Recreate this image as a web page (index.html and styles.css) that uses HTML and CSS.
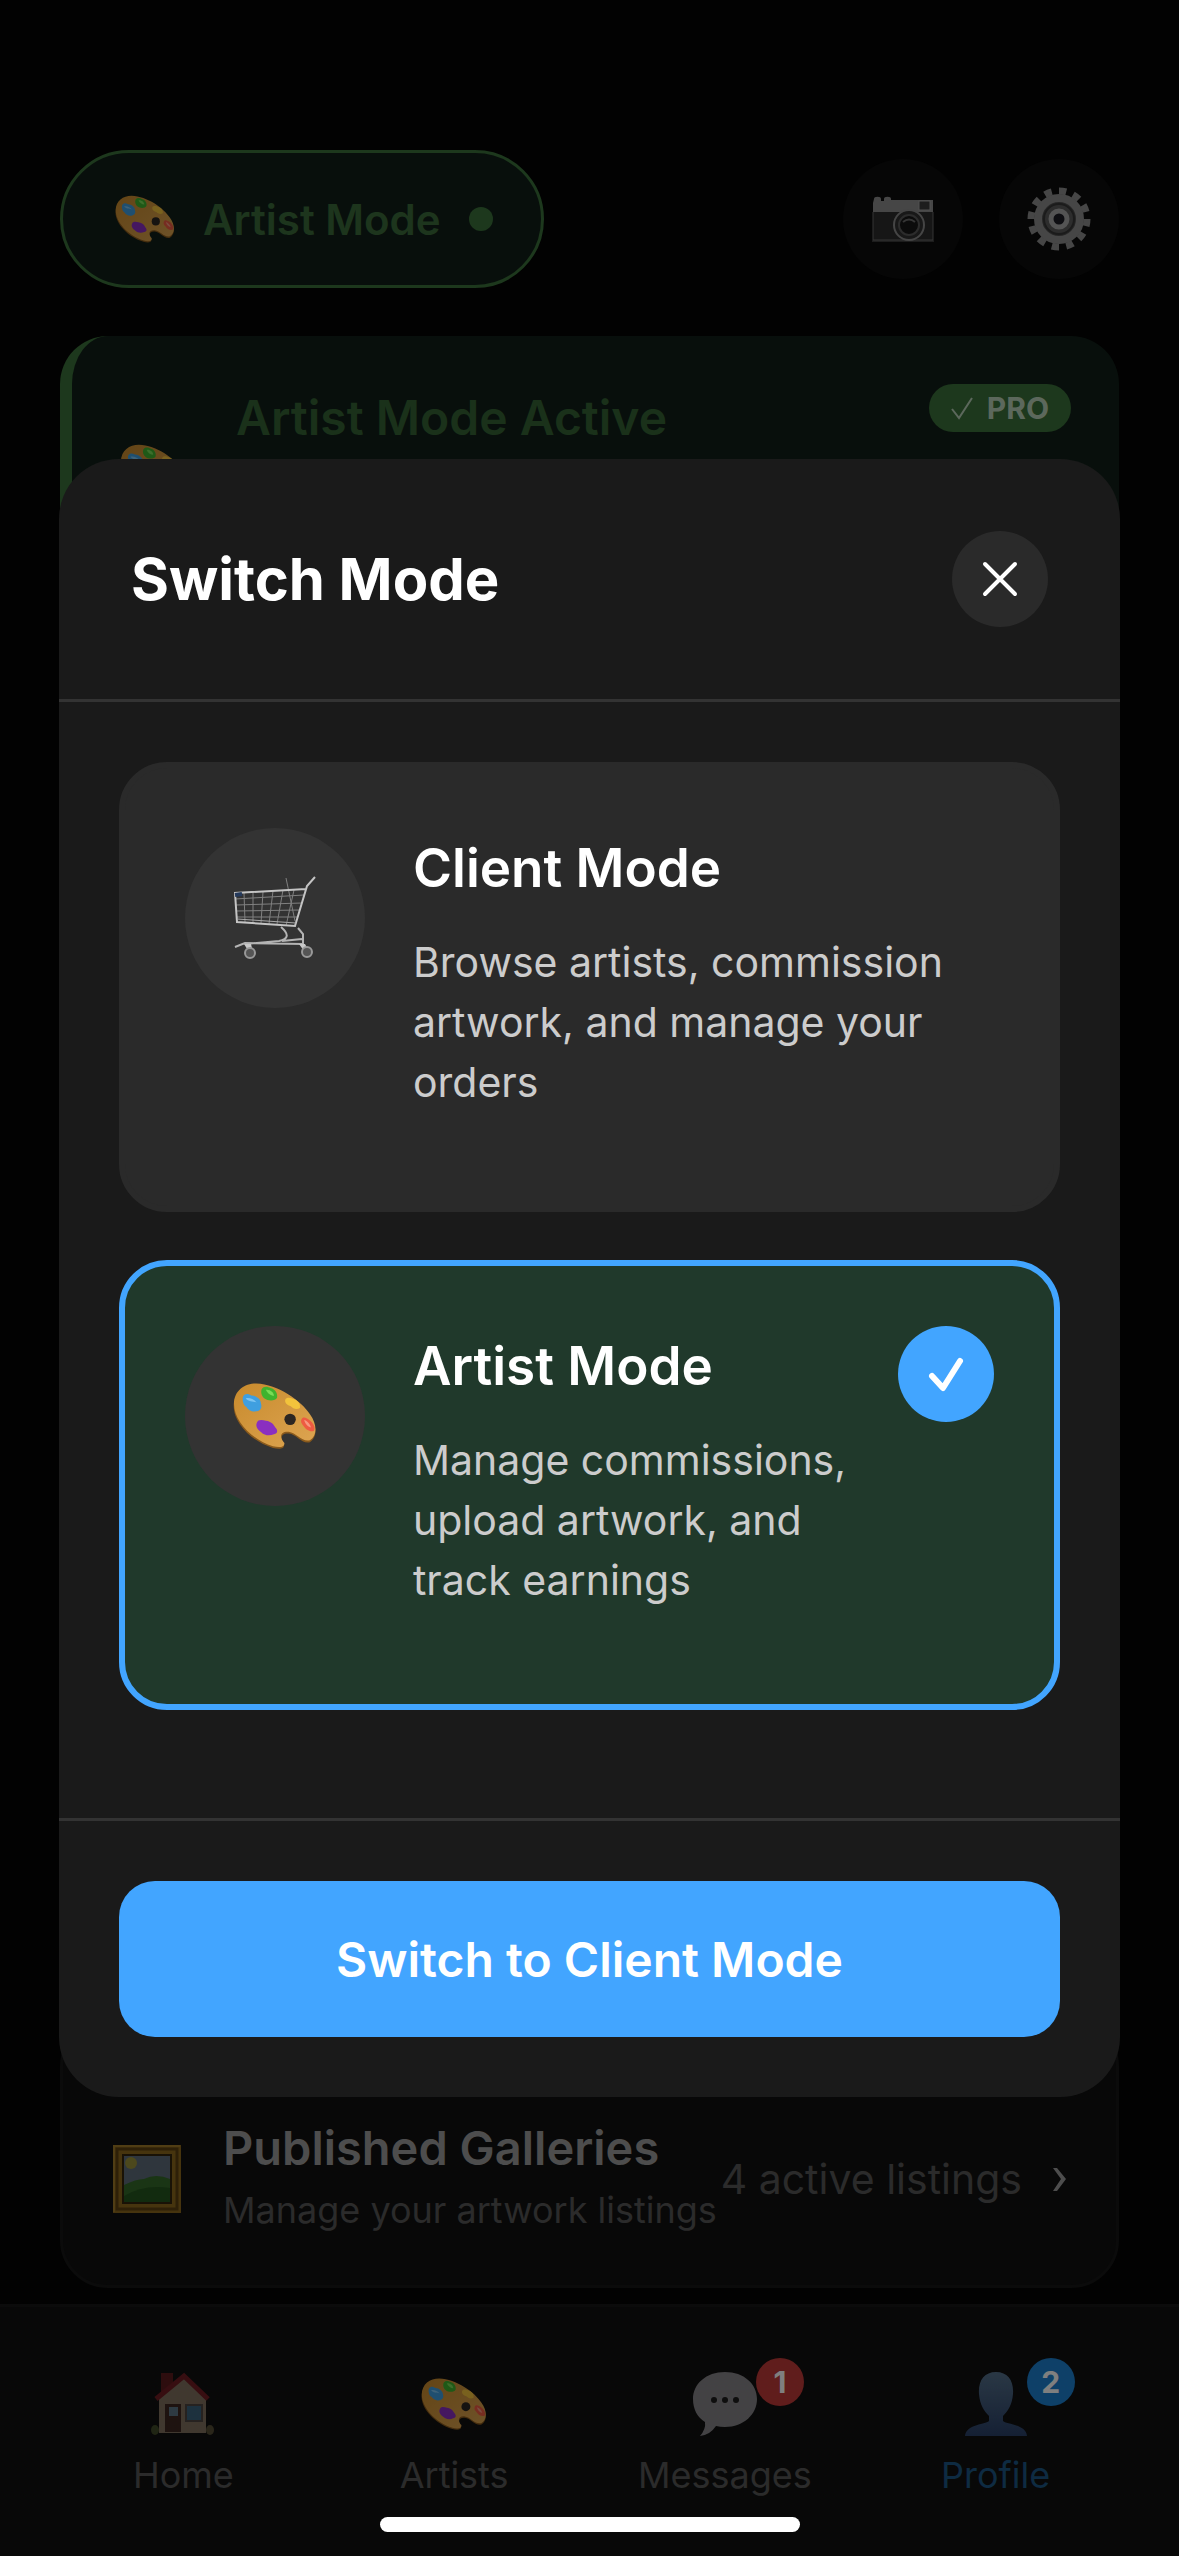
FILE: index.html
```html
<!DOCTYPE html>
<html lang="en">
<head>
<meta charset="utf-8">
<meta name="viewport" content="width=device-width, initial-scale=1">
<title>Switch Mode</title>
<link rel="stylesheet" href="styles.css">
</head>
<body>
<svg class="sprite" aria-hidden="true">
  <defs>
    <linearGradient id="wood" x1="0" y1="0" x2="1" y2="1">
      <stop offset="0" stop-color="#c88a2c"/>
      <stop offset="1" stop-color="#dda552"/>
    </linearGradient>
    <linearGradient id="silhouette" x1="0" y1="0" x2="0" y2="1">
      <stop offset="0" stop-color="#54708a"/>
      <stop offset="1" stop-color="#2a4068"/>
    </linearGradient>
    <symbol id="palette" viewBox="96 74 250 200">
      <path fill="#8a5a1c" d="M98 146C98 104 130 82 165 82C230 84 300 134 325 174C347 204 347 238 325 252C300 258 285 228 262 226C238 224 235 242 248 258C250 274 232 273 215 269C150 250 98 194 98 146Z"/>
      <path fill="url(#wood)" d="M99 138C99 98 130 77 165 77C230 79 300 129 325 169C347 199 347 233 325 246C302 253 285 224 262 221C235 219 234 238 249 254C250 269 232 268 215 264C152 245 99 188 99 138Z"/>
      <path fill="#3f9fe0" d="M126 116C132 106 142 108 150 113C162 112 180 124 179 137C184 150 176 160 164 160C154 163 140 155 136 147C128 144 122 126 126 116Z"/>
      <path fill="#7cc4f2" d="M134 122C142 118 160 124 166 134C156 130 142 132 134 122Z"/>
      <path fill="#3fb32e" d="M181 95C186 84 200 86 208 91C222 94 230 108 227 120C222 130 200 130 190 122C182 116 178 104 181 95Z"/>
      <path fill="#78dc56" d="M194 96C206 94 218 104 218 114C208 114 198 106 194 96Z"/>
      <path fill="#f2c33c" d="M252 124C258 116 270 120 278 124C290 128 298 140 295 150C286 156 274 152 268 145C258 142 248 134 252 124Z"/>
      <path fill="#8a2fc0" d="M167 194C170 183 184 185 194 188C210 190 218 200 222 208C230 216 230 226 218 228C204 234 190 232 180 222C170 216 162 204 167 194Z"/>
      <path fill="#ee5a42" d="M300 184C304 174 316 180 326 188C338 198 342 212 336 219C324 222 312 214 306 204C300 198 296 190 300 184Z"/>
      <path fill="#f79880" d="M308 186C316 188 326 198 328 208C318 206 310 196 308 186Z"/>
      <circle cx="266" cy="184" r="17" fill="#2c2622"/>
    </symbol>
  </defs>
</svg>

<div class="screen">
  <header class="topbar">
    <button class="mode-pill" type="button">
      <svg class="palette-sm" aria-hidden="true"><use href="#palette"/></svg>
      <span>Artist Mode</span>
      <span class="dot"></span>
    </button>
    <div class="tools">
      <button class="tool" type="button" aria-label="Camera">
        <svg width="64" height="46" viewBox="0 0 64 46" aria-hidden="true">
          <path fill="#8c8c8c" d="M3 3a3 2 0 0 1 7 0v2h3V3a3 2 0 0 1 7 0v1h42v13H2V7z"/>
          <path fill="#2c2c2c" d="M2 16h60v28H2z"/>
          <path fill="none" stroke="#6a6a6a" d="M2 16v28h60V16M1 45h62"/>
          <rect x="48" y="5" width="11" height="9" fill="#3a3a3a" stroke="#a0a0a0"/>
          <circle cx="38" cy="29" r="15" fill="#303030" stroke="#8a8a8a" stroke-width="2"/>
          <circle cx="38" cy="29" r="10" fill="#161616" stroke="#585858" stroke-width="2"/>
          <path fill="none" stroke="#6a6a6a" stroke-width="2" d="M32 26q6-5 12 0"/>
        </svg>
      </button>
      <button class="tool" type="button" aria-label="Settings">
        <svg width="64" height="64" viewBox="0 0 64 64" aria-hidden="true">
          <circle cx="32" cy="32" r="28" fill="none" stroke="#8c8c8c" stroke-width="7" pathLength="24" stroke-dasharray="1 1"/>
          <circle cx="32" cy="32" r="21" fill="#4c4c4c" stroke="#8c8c8c" stroke-width="8"/>
          <circle cx="32" cy="32" r="15" fill="#5a5a5a" stroke="#363636" stroke-width="2"/>
          <circle cx="32" cy="32" r="8" fill="#1c1c24" stroke="#a8a8a8" stroke-width="5"/>
        </svg>
      </button>
    </div>
  </header>

  <section class="banner">
    <svg class="palette-md" aria-hidden="true"><use href="#palette"/></svg>
    <h2>Artist Mode Active</h2>
    <span class="pro">
      <svg width="22" height="24" viewBox="0 0 22 24" aria-hidden="true"><path fill="none" stroke="#b8d0b8" stroke-width="2" d="M1 13l7 9L21 2"/></svg>
      PRO
    </span>
  </section>

  <a class="gallery" href="#galleries">
    <svg width="72" height="72" viewBox="0 0 72 72" aria-hidden="true">
      <rect x="2" y="2" width="68" height="68" fill="#8c681c"/>
      <rect x="6" y="6" width="60" height="60" fill="none" stroke="#5c4010" stroke-width="3"/>
      <rect x="12" y="12" width="48" height="48" fill="#5e6c7a" stroke="#33250c" stroke-width="2"/>
      <circle cx="20" cy="20" r="6" fill="#98903a"/>
      <path fill="#346a2a" d="M13 42q12-6 20-6q12-6 26 0v23H13z"/>
      <path fill="#24561f" d="M13 53q20-12 46-8v14H13z"/>
      <path fill="none" stroke="#a07a28" stroke-width="2" d="M3 69V3h66"/>
    </svg>
    <span class="gallery-text">
      <strong>Published Galleries</strong>
      <small>Manage your artwork listings</small>
    </span>
    <span class="gallery-count">4 active listings</span>
    <svg class="chevron" width="16" height="26" viewBox="0 0 16 26" aria-hidden="true"><path fill="#9a9a9a" d="M1 2h4l9 11l-9 12H1l8-12z"/></svg>
  </a>

  <nav class="tabs">
    <a class="tab" href="#home">
      <svg width="64" height="66" viewBox="0 0 64 66" aria-hidden="true">
        <path fill="#5a1a1c" d="M10 2h12v22H10z"/>
        <path fill="#80705e" d="M8 62V26L33 7l22 20v35z"/>
        <path fill="none" stroke="#6e1c22" stroke-width="5" d="M5 28L33 5l24 23"/>
        <rect x="14" y="33" width="16" height="28" fill="#3c2620"/>
        <rect x="18" y="36" width="9" height="9" fill="#5c7484"/>
        <rect x="35" y="34" width="16" height="16" fill="#3a627c" stroke="#4c4440" stroke-width="2"/>
        <ellipse cx="4" cy="59" rx="4" ry="5" fill="#404a28"/>
        <ellipse cx="59" cy="59" rx="4" ry="5" fill="#544c34"/>
      </svg>
      <span>Home</span>
    </a>
    <a class="tab" href="#artists">
      <svg class="palette-tab" aria-hidden="true"><use href="#palette"/></svg>
      <span>Artists</span>
    </a>
    <a class="tab" href="#messages">
      <svg width="64" height="66" viewBox="0 0 64 66" aria-hidden="true">
        <path fill="#868488" d="M32 1c19 0 32 12 32 27S51 56 32 56q-5 0-9-1q-6 9-16 10q6-7 5-14C4 46 0 38 0 28C0 13 13 1 32 1z"/>
        <g fill="#1c1c1c"><circle cx="21" cy="29" r="3"/><circle cx="32" cy="29" r="3"/><circle cx="43" cy="29" r="3"/></g>
      </svg>
      <span>Messages</span>
      <b class="count red">1</b>
    </a>
    <a class="tab active" href="#profile">
      <svg width="64" height="66" viewBox="0 0 64 66" aria-hidden="true">
        <path fill="url(#silhouette)" d="M32 1c12 0 18 9 17 22c-1 11-5 17-10 22v5c2 3 23 3 24 15H1c1-12 22-12 24-15v-5c-5-5-9-11-10-22C14 10 20 1 32 1z"/>
      </svg>
      <span>Profile</span>
      <b class="count blue">2</b>
    </a>
  </nav>
</div>

<div class="scrim">
  <div class="modal" role="dialog" aria-modal="true" aria-labelledby="dialog-title">
    <div class="modal-head">
      <h1 id="dialog-title">Switch Mode</h1>
      <button class="close" type="button" aria-label="Close">
        <svg width="36" height="36" viewBox="0 0 36 36" aria-hidden="true"><path fill="none" stroke="#fff" stroke-width="4" stroke-linecap="round" d="M3 3l30 30M33 3L3 33"/></svg>
      </button>
    </div>
    <div class="modal-body">
      <button class="option" type="button" aria-pressed="false">
        <span class="option-icon">
          <svg width="86" height="86" viewBox="0 0 86 86" fill="none" stroke="#a8a8a8" stroke-width="1" aria-hidden="true">
            <path stroke="#808080" d="M12 18l1 29M21 17l0 30M31 17l-2 31M41 16l-4 33M51 15l-6 34M62 15l-8 36M3 24l69-4M4 30l66-2M4 36l64-1M5 42l60 0M54 3l9 43"/>
            <path stroke-width="2" stroke="#c4c4c4" d="M83 2l-8 9L63 51L5 47L3 18l71-4"/>
            <path d="M5 44l59 4"/>
            <path stroke-width="2" stroke="#b4b4b4" d="M66 53l5 6v10l-58-1l-10 4M49 52c8 7 8 12-2 14l-34 3M50 66l20-2"/>
            <path fill="#c8c8c8" stroke="none" d="M12 69h7l2 8h-4zM67 69h6l4 7h-5z"/>
            <circle cx="18" cy="78" r="5" fill="#555" stroke="#999" stroke-width="2"/>
            <circle cx="75" cy="77" r="5" fill="#555" stroke="#999" stroke-width="2"/>
            <path stroke="#253a5c" stroke-width="4" d="M3 20l7-1"/>
          </svg>
        </span>
        <span class="option-text">
          <strong>Client Mode</strong>
          <span>Browse artists, commission artwork, and manage your orders</span>
        </span>
      </button>
      <button class="option selected" type="button" aria-pressed="true">
        <span class="option-icon">
          <svg class="palette-lg" aria-hidden="true"><use href="#palette"/></svg>
        </span>
        <span class="option-text">
          <strong>Artist Mode</strong>
          <span>Manage commissions, upload artwork, and track earnings</span>
        </span>
        <span class="tick">
          <svg width="36" height="36" viewBox="0 0 36 36" aria-hidden="true"><path fill="none" stroke="#fff" stroke-width="6" stroke-linecap="round" stroke-linejoin="round" d="M4 20l11 12L32 5"/></svg>
        </span>
      </button>
    </div>
    <div class="modal-foot">
      <button class="primary" type="button">Switch to Client Mode</button>
    </div>
  </div>
  <div class="home-indicator"></div>
</div>
</body>
</html>
```

FILE: styles.css
```css
* {
  box-sizing: border-box;
}

body {
  margin: 0;
  background: #040404;
  color: #fff;
  font-family: Inter, "Liberation Sans", sans-serif;
}

button {
  margin: 0;
  border: 0;
  padding: 0;
  color: inherit;
  font: inherit;
  cursor: pointer;
}

a {
  color: inherit;
  text-decoration: none;
}

h1,
h2 {
  margin: 0;
}

svg {
  display: block;
  flex: none;
}

.sprite {
  position: absolute;
  width: 0;
  height: 0;
}

.palette-sm {
  width: 60px;
  height: 48px;
}

.palette-md {
  width: 68px;
  height: 54px;
}

.palette-tab {
  width: 66px;
  height: 66px;
}

.palette-lg {
  width: 84px;
  height: 68px;
}

/* Profile screen */
.screen {
  min-height: 100vh;
  display: flex;
  flex-direction: column;
}

.topbar {
  display: flex;
  align-items: center;
  justify-content: space-between;
  padding: 150px 60px 48px;
}

.mode-pill {
  display: flex;
  align-items: center;
  gap: 28px;
  min-height: 138px;
  padding: 0 48px 0 52px;
  border: 3px solid #3a703a;
  border-radius: 72px;
  background: #101f18;
  color: #3a6a3a;
  font-size: 42px;
  font-weight: 600;
}

.dot {
  width: 24px;
  height: 24px;
  border-radius: 50%;
  background: #3a703a;
}

.tools {
  display: flex;
  gap: 36px;
}

.tool {
  display: grid;
  place-items: center;
  width: 120px;
  height: 120px;
  border-radius: 50%;
  background: #0c0c0c;
}

.banner {
  display: flex;
  align-items: flex-start;
  gap: 48px;
  min-height: 270px;
  margin: 0 60px;
  padding: 48px;
  border-left: 12px solid #3a703a;
  border-radius: 48px;
  background: #101f18;
}

.banner .palette-md {
  align-self: center;
}

.banner h2 {
  flex: 1;
  color: #346234;
  font-size: 48px;
  font-weight: 600;
  line-height: 68px;
}

.pro {
  display: flex;
  align-items: center;
  gap: 14px;
  height: 48px;
  padding: 0 22px;
  border-radius: 24px;
  background: #3a703a;
  color: #b8d0b8;
  font-size: 30px;
  font-weight: 700;
}

.gallery {
  display: flex;
  align-items: center;
  margin: auto 60px 16px;
  padding: 96px 48px 44px;
  border: 3px solid #161616;
  border-radius: 48px;
  background: #101010;
  color: #565656;
}

.gallery-text {
  display: flex;
  flex-direction: column;
  flex: 1;
  margin-left: 40px;
  white-space: nowrap;
}

.gallery-text strong {
  color: #9a9a9a;
  font-size: 47px;
  font-weight: 600;
  line-height: 62px;
}

.gallery-text small {
  font-size: 36px;
  line-height: 62px;
}

.gallery-count {
  font-size: 41px;
  white-space: nowrap;
}

.chevron {
  margin-left: 30px;
}

.tabs {
  display: grid;
  grid-template-columns: repeat(4, 1fr);
  min-height: 252px;
  padding: 64px 48px 0;
  border-top: 3px solid #161616;
  background: #101010;
}

.tab {
  position: relative;
  display: flex;
  flex-direction: column;
  align-items: center;
  gap: 14px;
  color: #565656;
  font-size: 36px;
  line-height: 48px;
}

.tab.active {
  color: #1c5684;
}

.count {
  position: absolute;
  top: -13px;
  left: calc(50% + 31px);
  width: 48px;
  height: 48px;
  border-radius: 50%;
  color: #fff;
  font-size: 30px;
  font-weight: 700;
  line-height: 48px;
  text-align: center;
}

.count.red {
  background: #c03a38;
}

.count.blue {
  background: #1c80d0;
}

/* Mode dialog */
.scrim {
  position: fixed;
  inset: 0;
  display: flex;
  align-items: center;
  justify-content: center;
  background: rgba(0, 0, 0, 0.5);
}

.modal {
  width: 90%;
  border-radius: 60px;
  background: #1a1a1a;
}

.modal-head {
  display: flex;
  align-items: center;
  justify-content: space-between;
  padding: 72px;
  border-bottom: 3px solid #333;
}

.modal-head h1 {
  font-size: 58px;
  font-weight: 700;
  line-height: 72px;
}

.close,
.tick {
  display: grid;
  place-items: center;
  flex: none;
  width: 96px;
  height: 96px;
  border-radius: 50%;
}

.close {
  background: #2a2a2a;
}

.tick {
  margin-left: 24px;
  background: #42a5ff;
}

.modal-body {
  display: flex;
  flex-direction: column;
  gap: 48px;
  padding: 60px 60px 108px;
}

.option {
  display: flex;
  align-items: flex-start;
  min-height: 450px;
  padding: 60px;
  border: 6px solid #2a2a2a;
  border-radius: 48px;
  background: #2a2a2a;
  text-align: left;
}

.option.selected {
  border-color: #42a5ff;
  background: #20392b;
}

.option-icon {
  display: grid;
  place-items: center;
  flex: none;
  width: 180px;
  height: 180px;
  margin-right: 48px;
  border-radius: 50%;
  background: #333;
}

.option-text {
  display: flex;
  flex-direction: column;
  flex: 1;
  gap: 24px;
  color: #ccc;
  font-size: 41px;
  line-height: 60px;
}

.option-text strong {
  color: #fff;
  font-size: 53px;
  font-weight: 600;
  line-height: 80px;
}

.modal-foot {
  padding: 60px;
  border-top: 3px solid #333;
}

.primary {
  width: 100%;
  min-height: 156px;
  border-radius: 36px;
  background: #42a5ff;
  font-size: 48px;
  font-weight: 600;
}

.home-indicator {
  position: absolute;
  bottom: 24px;
  left: 50%;
  width: 420px;
  height: 15px;
  margin-left: -210px;
  border-radius: 8px;
  background: #fff;
}
```
